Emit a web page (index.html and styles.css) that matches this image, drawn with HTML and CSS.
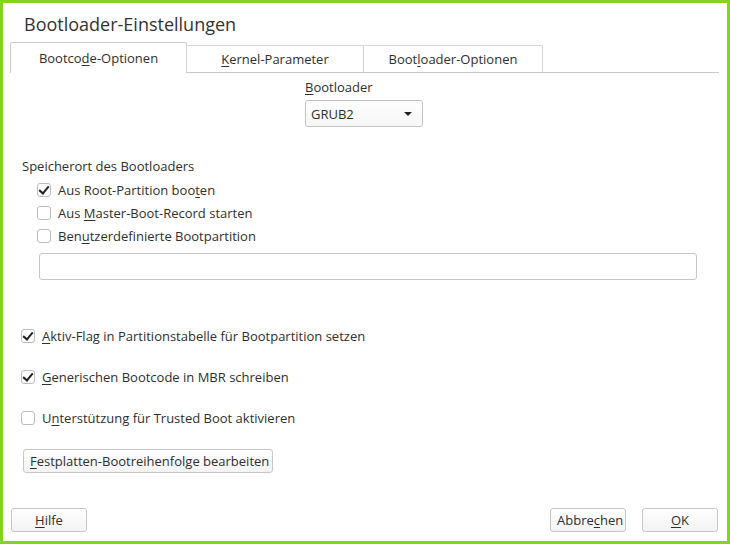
FILE: index.html
```html
<!DOCTYPE html>
<html lang="de">
<head>
    <title>Bootloader-Einstellungen</title>
    <link rel="stylesheet" href="styles.css">
</head>
<body>
    <div class="window">
        <h1 class="title">Bootloader-Einstellungen</h1>

        <div class="tabs">
            <div class="tab active">Bootco<u>d</u>e-Optionen</div>
            <div class="tab"><u>K</u>ernel-Parameter</div>
            <div class="tab">Boot<u>l</u>oader-Optionen</div>
        </div>

        <main class="panel">
            <div class="loader">
                <label class="loader-label"><u>B</u>ootloader</label>
                <div class="combo">
                    <span>GRUB2</span>
                    <span class="arrow"></span>
                </div>
            </div>

            <div class="location">
                <div class="group-title">Speicherort des Bootloaders</div>
                <div class="check-list">
                    <div class="check"><span class="box checked"></span><span>Aus Root-Partition boo<u>t</u>en</span></div>
                    <div class="check"><span class="box"></span><span>Aus <u>M</u>aster-Boot-Record starten</span></div>
                    <div class="check"><span class="box"></span><span>Ben<u>u</u>tzerdefinierte Bootpartition</span></div>
                </div>
                <div class="text-input"></div>
            </div>

            <div class="options">
                <div class="check"><span class="box checked"></span><span><u>A</u>ktiv-Flag in Partitionstabelle für Bootpartition setzen</span></div>
                <div class="check"><span class="box checked"></span><span><u>G</u>enerischen Bootcode in MBR schreiben</span></div>
                <div class="check"><span class="box"></span><span>U<u>n</u>terstützung für Trusted Boot aktivieren</span></div>
            </div>

            <button class="btn disk-order"><u>F</u>estplatten-Bootreihenfolge bearbeiten</button>
        </main>

        <footer class="buttons">
            <button class="btn"><u>H</u>ilfe</button>
            <div class="right">
                <button class="btn">Abbre<u>c</u>hen</button>
                <button class="btn"><u>O</u>K</button>
            </div>
        </footer>
    </div>
</body>
</html>
```

FILE: styles.css
```css
body {
    margin: 0;
    padding: 0;
    font-family: "Open Sans", "DejaVu Sans", sans-serif;
    font-size: 13px;
    color: #2f2f2f;
    background: #fff;
}

u {
    text-decoration-thickness: 1px;
    text-underline-offset: 2px;
}

.window {
    box-sizing: border-box;
    width: 730px;
    height: 544px;
    border: 3px solid #82d41c;
    display: flex;
    flex-direction: column;
}

.title {
    margin: 9px 0 0 21px;
    font-size: 18px;
    font-weight: normal;
    line-height: 24px;
    color: #333;
}

/* tab bar */
.tabs {
    display: flex;
    align-items: flex-end;
    margin: 6px 8px 0 7px;
    height: 30px;
    border-bottom: 1px solid #c9c9c9;
}

.tab {
    box-sizing: border-box;
    width: 178px;
    height: 27px;
    border: 1px solid #d6d6d6;
    border-bottom: none;
    border-radius: 2px 2px 0 0;
    text-align: center;
    line-height: 26px;
    margin-right: -1px;
    white-space: nowrap;
}

.tab.active {
    width: 177px;
    height: 31px;
    margin-bottom: -1px;
    background: #fff;
    border-color: #c9c9c9;
    line-height: 30px;
}

.tab:nth-child(3) {
    width: 180px;
}

.panel {
    flex: 1;
    display: flex;
    flex-direction: column;
}

/* bootloader selection */
.loader {
    display: flex;
    flex-direction: column;
    margin: 5px 0 0 302px;
}

.loader-label {
    line-height: 18px;
}

.combo {
    box-sizing: border-box;
    width: 118px;
    height: 27px;
    margin-top: 4px;
    border: 1px solid #c4c4c4;
    border-radius: 3px;
    display: flex;
    align-items: center;
    justify-content: space-between;
    padding: 0 10px 0 5px;
    background: linear-gradient(#fff, #f6f6f6);
}

.arrow {
    width: 0;
    height: 0;
    border-left: 4px solid transparent;
    border-right: 4px solid transparent;
    border-top: 4px solid #222;
}

/* bootloader location */
.location {
    margin: 30px 0 0 19px;
}

.group-title {
    line-height: 18px;
}

.check-list {
    margin: 6px 0 0 15px;
    display: flex;
    flex-direction: column;
    gap: 5px;
}

.check {
    display: flex;
    align-items: center;
    line-height: 18px;
    white-space: nowrap;
}

.box {
    box-sizing: border-box;
    flex: none;
    width: 14px;
    height: 14px;
    border: 1px solid #bdbdbd;
    border-radius: 3px;
    margin-right: 7px;
    position: relative;
    background: #fff;
}

.box.checked::after {
    content: "";
    position: absolute;
    left: 3px;
    top: 0;
    width: 4px;
    height: 8px;
    border-right: 2px solid #222;
    border-bottom: 2px solid #222;
    transform: rotate(40deg);
}

.text-input {
    box-sizing: border-box;
    width: 658px;
    height: 27px;
    margin: 8px 0 0 17px;
    border: 1px solid #c6c6c6;
    border-radius: 3px;
}

/* extra options */
.options {
    margin: 47px 0 0 18px;
    display: flex;
    flex-direction: column;
    gap: 23px;
}

.btn {
    box-sizing: border-box;
    height: 24px;
    padding: 0 6px;
    font-family: inherit;
    font-size: 13px;
    color: #2f2f2f;
    white-space: nowrap;
    border: 1px solid #c6c6c6;
    border-radius: 3px;
    background: linear-gradient(#fff, #f3f3f3);
}

.disk-order {
    align-self: flex-start;
    margin: 22px 0 0 20px;
    width: 250px;
}

/* dialog buttons */
.buttons {
    display: flex;
    justify-content: space-between;
    margin: 0 9px 9px 8px;
}

.buttons .btn {
    width: 76px;
}

.right {
    display: flex;
    gap: 16px;
}
```
